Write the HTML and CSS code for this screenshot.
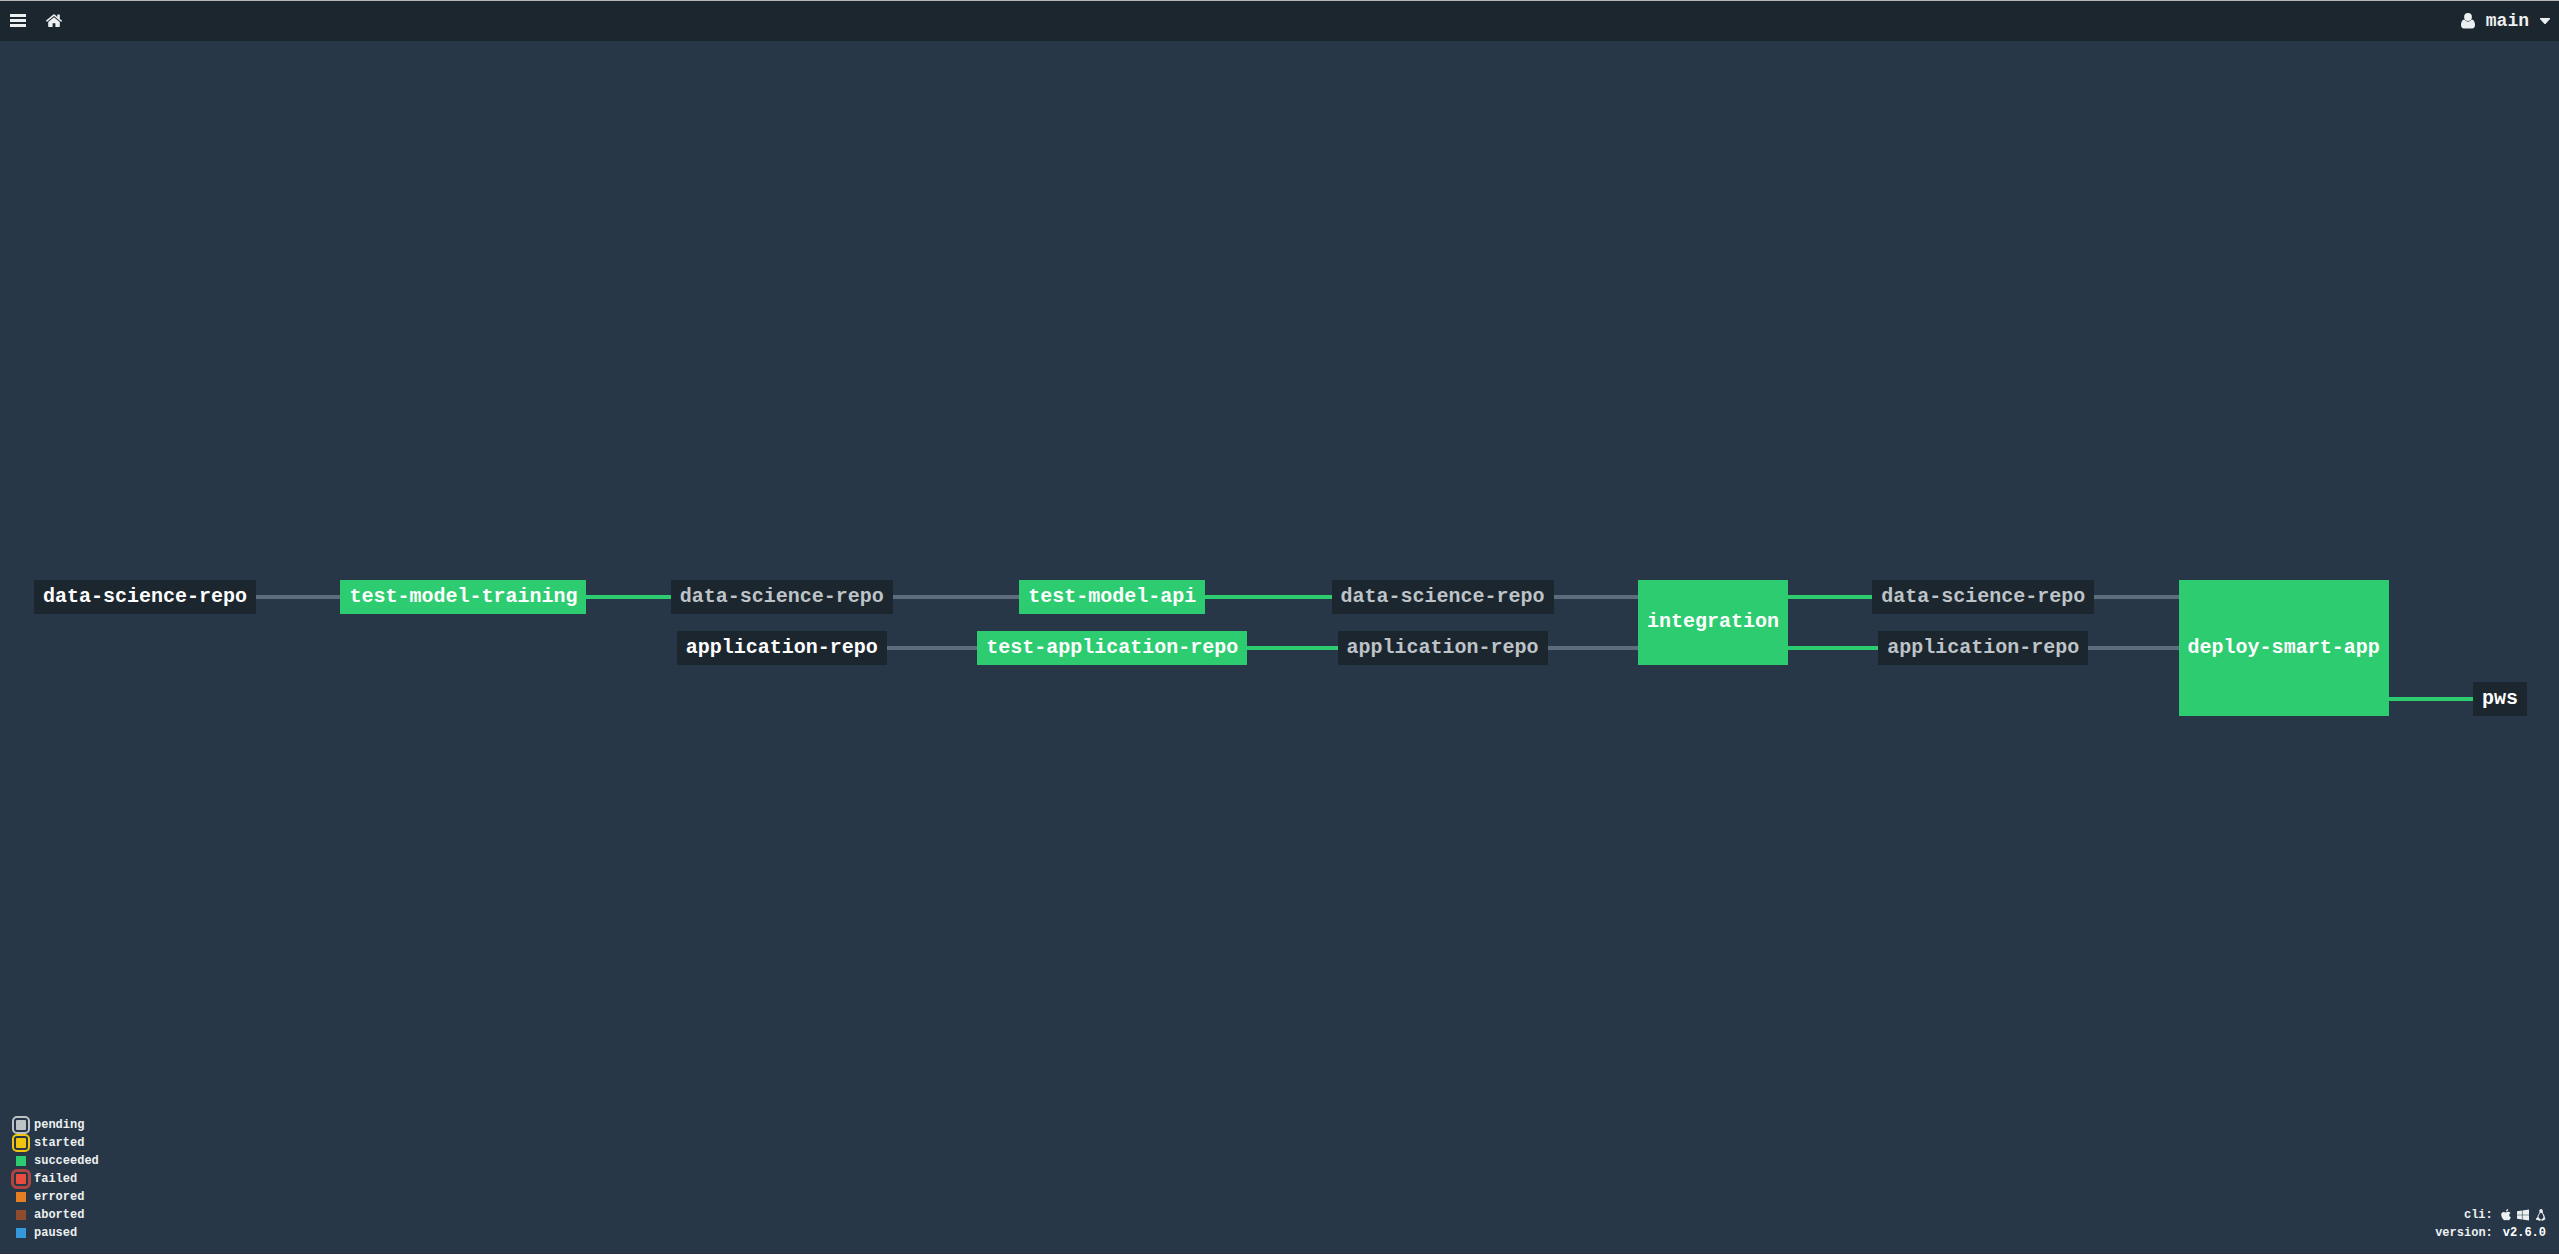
FILE: index.html
```html
<!DOCTYPE html>
<html lang="en">
<head>
<meta charset="utf-8">
<title>Pipeline - Concourse</title>
<link rel="stylesheet" href="styles.css">
</head>
<body>
<header class="topbar">
  <nav class="group" aria-label="Main">
    <button class="icon-button" type="button" aria-label="Toggle pipelines">
      <svg class="icon" width="16" height="14" viewBox="0 0 16 14"><path d="M0 0h16v3H0zM0 5h16v3H0zM0 10h16v3H0z"/></svg>
    </button>
    <a class="icon-button" href="#" aria-label="Home">
      <svg class="icon" width="16" height="14" viewBox="0 0 16 14"><path d="M8 3.3 2.2 8v4.6c0 .3.2.5.5.5h3.9V9.2h2.8v3.9h3.9c.3 0 .5-.2.5-.5V8z"/><path d="M13.8 5.1V.9c0-.2-.1-.3-.3-.3h-1.900c-.2 0-.3.1-.3.3v2L9 .7a1.600 1.600 0 0 0-2 0L.1 6.600c-.1.1-.1.3 0 .4l.6.8c.1.1.3.1.4 0L8 2l6.900 5.800c.1.1.3.1.4 0l.6-.8c.1-.1.1-.3 0-.4z"/></svg>
    </a>
  </nav>
  <button class="user" type="button">
    <svg class="icon" width="14" height="16" viewBox="0 0 14 16"><ellipse cx="7" cy="4" rx="3.9" ry="4"/><path d="M3.3 6.4C1 6.7 0 9 0 12.300c0 1.800 1.200 3.200 2.800 3.200h8.400c1.600 0 2.800-1.400 2.800-3.200 0-3.300-1-5.600-3.300-5.900A5.300 5.300 0 0 1 7 8.800a5.300 5.300 0 0 1-3.700-2.400z"/></svg>
    <span>main</span>
    <svg class="icon" width="10" height="6" viewBox="0 0 10 6"><path d="M0 0h10v1L5.500 6h-1L0 1z"/></svg>
  </button>
</header>

<main class="pipeline">
  <div class="graph">
    <div class="cell c1 r1"><a class="node resource" href="#">data-science-repo</a></div>
    <span class="wire g2 r1"></span>
    <div class="cell c3 r1"><a class="node job" href="#">test-model-training</a></div>
    <span class="wire passed g4 r1"></span>
    <div class="cell c5 r1"><a class="node resource constrained" href="#">data-science-repo</a></div>
    <span class="wire g6 r1"></span>
    <div class="cell c7 r1"><span class="wire"></span><a class="node job" href="#">test-model-api</a><span class="wire passed"></span></div>
    <span class="wire passed g8 r1"></span>
    <div class="cell c9 r1"><a class="node resource constrained" href="#">data-science-repo</a></div>
    <span class="wire g10 r1"></span>
    <div class="cell c11 r12"><a class="node job" href="#">integration</a></div>
    <span class="wire passed g12 r1"></span>
    <div class="cell c13 r1"><a class="node resource constrained" href="#">data-science-repo</a></div>
    <span class="wire g14 r1"></span>
    <div class="cell c15 r123"><a class="node job" href="#">deploy-smart-app</a></div>

    <div class="cell c5 r2"><span class="wire none"></span><a class="node resource" href="#">application-repo</a><span class="wire"></span></div>
    <span class="wire g6 r2"></span>
    <div class="cell c7 r2"><a class="node job" href="#">test-application-repo</a></div>
    <span class="wire passed g8 r2"></span>
    <div class="cell c9 r2"><span class="wire passed"></span><a class="node resource constrained" href="#">application-repo</a><span class="wire"></span></div>
    <span class="wire g10 r2"></span>
    <span class="wire passed g12 r2"></span>
    <div class="cell c13 r2"><span class="wire passed"></span><a class="node resource constrained" href="#">application-repo</a><span class="wire"></span></div>
    <span class="wire g14 r2"></span>

    <span class="wire passed g16 r3"></span>
    <div class="cell c17 r3"><a class="node resource" href="#">pws</a></div>
  </div>
</main>

<footer class="footer">
  <ul class="legend">
    <li><span class="swatch pending"></span>pending</li>
    <li><span class="swatch started"></span>started</li>
    <li><span class="swatch succeeded"></span>succeeded</li>
    <li><span class="swatch failed"></span>failed</li>
    <li><span class="swatch errored"></span>errored</li>
    <li><span class="swatch aborted"></span>aborted</li>
    <li><span class="swatch paused"></span>paused</li>
  </ul>
  <dl class="info">
    <dt>cli:</dt>
    <dd class="downloads">
      <a href="#" aria-label="macOS"><svg class="icon" width="10" height="12" viewBox="0 0 10 12"><path d="M9.900 8.100c-.3.900-.7 1.600-1.200 2.300-.4.500-.8.900-1.300.9-.6 0-.9-.4-1.900-.4s-1.400.4-1.900.4c-.6 0-1-.4-1.500-1C1.100 9 .2 7.200.2 5.600.2 3.900 1.300 2.900 2.700 2.900c.9 0 1.500.5 2.200.5.700 0 1.200-.6 2.500-.6.800 0 1.600.4 2.100 1.100-1.900 1.100-1.500 3.600.4 4.200z"/><path d="M7.200 0c.1 1.400-1 2.500-2.300 2.600C4.800 1.300 5.900.1 7.200 0z"/></svg></a>
      <a href="#" aria-label="Windows"><svg class="icon" width="12" height="12" viewBox="0 0 12 12"><path d="M0 2.200 4.900 1.500v4.200H0zM5.500 1.400 12 .5v5.200H5.500zM0 6.300h4.900v4.200L0 9.800zM5.500 6.300H12v5.200l-6.500-.9z"/></svg></a>
      <a href="#" aria-label="Linux"><svg class="icon" width="10" height="12" viewBox="0 0 10 12"><path fill-rule="evenodd" d="M5 0C3.700 0 3.300 1 3.400 2.300c.1 1.400-.1 1.900-.9 3C1.800 6.300 1.300 7.400 1.400 8.400L.2 9.300c-.3.300 0 .8 0 1.200-.1.700 2.300.6 2.900 1.200.6.400 1.200-.1 1.400-.5h1.200c.3.600 1 .8 1.500.3.700-.8 1.700-.8 2.300-1.300.4-.3-.5-.7-.6-1.300 0-1.100-.3-2.500-1.200-3.700-.7-1-.9-1.400-.9-2.700C6.800.9 6.400 0 5 0zM4.200 3.700l.9.500.9-.5c.2 1.200 1.200 2.400 1.400 3.700.1.500 0 1-.1 1.300-.6.100-.6 1-.9 1.400-.8.500-1.900.5-2.700-.1-.1-.8-.7-1.300-1.300-2.100.1-1.600 1.500-2.800 1.800-4.200z"/></svg></a>
    </dd>
    <dt>version:</dt>
    <dd class="version">v2.6.0</dd>
  </dl>
</footer>
</body>
</html>
```
FILE: styles.css
```css
* { box-sizing: border-box; }

body {
  margin: 0;
  min-height: 100vh;
  display: flex;
  flex-direction: column;
  border-bottom: 1px solid #2e2d3d;
  background: #273747;
  color: #ecf0f1;
  font-family: "Liberation Mono", "Courier New", monospace;
  font-weight: 700;
}

a { color: inherit; text-decoration: none; }
button {
  border: 0;
  padding: 0;
  background: none;
  color: inherit;
  font: inherit;
  cursor: pointer;
}
.icon { display: block; fill: currentColor; }

/* Top bar */
.topbar {
  display: flex;
  justify-content: space-between;
  height: 41px;
  padding: 0 9px 0 10px;
  border-top: 1px solid #b4b8b9;
  background: #1c262f;
}
.group { display: flex; align-items: center; gap: 20px; }
.icon-button { display: block; }
.user {
  display: flex;
  align-items: center;
  gap: 11px;
  font-size: 18px;
  line-height: 24px;
}

/* Pipeline graph: node columns alternate with stretching wire columns */
.pipeline {
  flex: 1;
  display: flex;
  flex-direction: column;
  justify-content: center;
  padding: 138px 32px 0 34px;
}
.graph {
  display: grid;
  grid-template-columns: auto repeat(8, 1fr auto);
  grid-template-rows: repeat(3, 34px);
  row-gap: 17px;
}
.cell { display: flex; align-items: center; justify-content: center; }
.node {
  display: flex;
  align-items: center;
  align-self: stretch;
  padding: 0 9px;
  font-size: 20px;
  line-height: 24px;
  white-space: nowrap;
}
.job { background: #2ecc71; color: #fff; }
.resource { background: #1c262f; color: #fff; }
.constrained { color: #bdc3c7; }
.wire { flex: 1; align-self: center; height: 4px; background: #5d6d7e; }
.passed { background: #2ecc71; }
.none { background: none; }

.r1 { grid-row: 1; }
.r2 { grid-row: 2; }
.r3 { grid-row: 3; }
.r12 { grid-row: 1 / 3; }
.r123 { grid-row: 1 / 4; }
.c1 { grid-column: 1; }
.g2 { grid-column: 2; }
.c3 { grid-column: 3; }
.g4 { grid-column: 4; }
.c5 { grid-column: 5; }
.g6 { grid-column: 6; }
.c7 { grid-column: 7; }
.g8 { grid-column: 8; }
.c9 { grid-column: 9; }
.g10 { grid-column: 10; }
.c11 { grid-column: 11; }
.g12 { grid-column: 12; }
.c13 { grid-column: 13; }
.g14 { grid-column: 14; }
.c15 { grid-column: 15; }
.g16 { grid-column: 16; }
.c17 { grid-column: 17; }

/* Legend and build info */
.footer {
  display: flex;
  justify-content: space-between;
  align-items: flex-end;
  padding: 0 13px 11px 16px;
  font-size: 12px;
  line-height: 18px;
}
.legend { margin: 0; padding: 0; list-style: none; }
.legend li { display: flex; align-items: center; gap: 8px; height: 18px; }
.swatch { box-sizing: content-box; width: 10px; height: 10px; background-clip: content-box; }
.pending, .started { margin: -4px; padding: 2px; border: 2px solid; border-radius: 5px; }
.pending { background-color: #bdc3c7; border-color: #bdc3c7; }
.started { background-color: #f1c40f; border-color: #f1c40f; }
.failed {
  margin: -5px;
  padding: 2px;
  border: 3px solid #b04540;
  border-radius: 6px;
  background-color: #e74c3c;
}
.succeeded { background-color: #2ecc71; }
.errored { background-color: #e67e22; }
.aborted { background-color: #8f4b2d; }
.paused { background-color: #3498db; }

.info {
  display: grid;
  grid-template-columns: auto auto;
  column-gap: 8px;
  margin: 0;
}
.info dt { text-align: right; }
.info dd { margin: 0; }
.downloads { display: flex; align-items: center; justify-content: space-between; }
.version { padding-left: 2px; color: #fff; }
```
